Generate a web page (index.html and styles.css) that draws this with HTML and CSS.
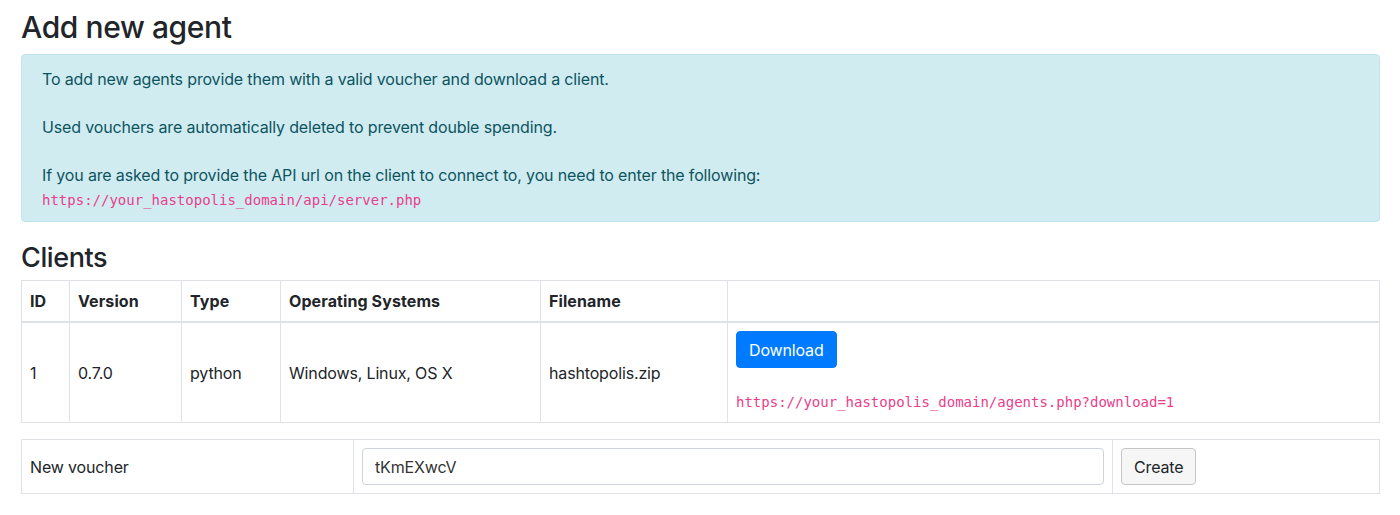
FILE: index.html
```html
<!DOCTYPE html>
<html>
<head>
<meta charset="utf-8">
<link rel="stylesheet" href="styles.css">
</head>
<body>
<div class="container">
  <h2 class="title">Add new agent</h2>
  <div class="alert">
    <p class="line">To add new agents provide them with a valid voucher and download a client.</p>
    <p class="line blank"></p>
    <p class="line">Used vouchers are automatically deleted to prevent double spending.</p>
    <p class="line blank"></p>
    <p class="line">If you are asked to provide the API url on the client to connect to, you need to enter the following:</p>
    <p class="line"><code>https://your_hastopolis_domain/api/server.php</code></p>
  </div>
  <h3 class="subtitle">Clients</h3>
  <table class="table clients">
    <colgroup>
      <col class="c-id"><col class="c-ver"><col class="c-type"><col class="c-os"><col class="c-file"><col>
    </colgroup>
    <thead>
      <tr><th>ID</th><th>Version</th><th>Type</th><th>Operating Systems</th><th>Filename</th><th></th></tr>
    </thead>
    <tbody>
      <tr>
        <td>1</td><td>0.7.0</td><td>python</td><td>Windows, Linux, OS X</td><td>hashtopolis.zip</td>
        <td>
          <div class="dl-cell">
            <button class="btn btn-primary">Download</button>
            <code class="dl-url">https://your_hastopolis_domain/agents.php?download=1</code>
          </div>
        </td>
      </tr>
    </tbody>
  </table>
  <table class="table voucher">
    <colgroup><col class="v-label"><col class="v-input"><col></colgroup>
    <tbody>
      <tr>
        <td>New voucher</td>
        <td><input class="form-control" type="text" value="tKmEXwcV"></td>
        <td><button class="btn btn-default">Create</button></td>
      </tr>
    </tbody>
  </table>
</div>
</body>
</html>
```
FILE: styles.css
```css
html, body {
  margin: 0;
  padding: 0;
  background: #fff;
}
body {
  font-family: "Inter", "Liberation Sans", sans-serif;
  font-size: 16px;
  line-height: 24px;
  color: #212529;
  letter-spacing: -0.15px;
}
.container {
  padding: 8px 20px 0 21px;
}
.title {
  font-size: 30px;
  font-weight: 500;
  line-height: 38px;
  margin: 0 0 8px 0;
  letter-spacing: -0.4px;
}
.subtitle {
  font-size: 27px;
  font-weight: 500;
  line-height: 34px;
  margin: 0 0 8px 0;
  padding-top: 3px;
  height: 31px;
  letter-spacing: -0.4px;
}
.alert {
  background: #d1ecf1;
  border: 1px solid #bee5eb;
  color: #0c5460;
  border-radius: 4px;
  padding: 12px 20px 10px 20px;
  margin-bottom: 16px;
}
.line {
  margin: 0;
  height: 24px;
  line-height: 24px;
}
code {
  font-family: "DejaVu Sans Mono", "Liberation Mono", monospace;
  font-size: 14px;
  line-height: 24px;
  color: #e83e8c;
  letter-spacing: 0;
}
.table {
  width: 100%;
  border-collapse: collapse;
  table-layout: fixed;
  margin-bottom: 16px;
}
.table th, .table td {
  border: 1px solid #dee2e6;
  padding: 8px;
  text-align: left;
  vertical-align: middle;
}
.table th {
  font-weight: 700;
  letter-spacing: 0.1px;
}
.table thead th {
  border-bottom-width: 2px;
}
.c-id { width: 48px; }
.c-ver { width: 112px; }
.c-type { width: 99px; }
.c-os { width: 260px; }
.c-file { width: 187px; }
.v-label { width: 332px; }
.v-input { width: 759px; }
.dl-cell {
  display: flex;
  flex-direction: column;
  align-items: flex-start;
}
.dl-url {
  display: block;
  margin-top: 22px;
}
.btn {
  font-family: inherit;
  font-size: 16px;
  line-height: 24px;
  height: 37px;
  box-sizing: border-box;
  padding: 5px 12px;
  border-radius: 4px;
  vertical-align: middle;
  letter-spacing: -0.15px;
}
.btn-primary {
  background: #007bff;
  border: 1px solid #007bff;
  color: #fff;
}
.btn-default {
  background: #f6f6f6;
  border: 1px solid #c6c6c6;
  color: #212529;
}
.voucher td {
  padding-top: 8px;
  padding-bottom: 8px;
}
.form-control {
  display: block;
  width: 100%;
  box-sizing: border-box;
  height: 37px;
  padding: 5px 12px;
  font-family: inherit;
  font-size: 16px;
  line-height: 24px;
  color: #333;
  background: #fff;
  border: 1px solid #ced4da;
  border-radius: 4px;
  letter-spacing: -0.15px;
}
```
